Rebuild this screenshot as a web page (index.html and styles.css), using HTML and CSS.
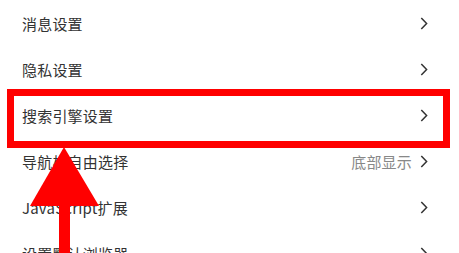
FILE: index.html
```html
<!DOCTYPE html>
<html lang="zh-CN">
<head>
<meta charset="utf-8">
<title>设置</title>
<link rel="stylesheet" href="styles.css">
</head>
<body>
<div class="page">
  <ul class="settings">
    <li class="row"><span class="label">消息设置</span><span class="right"><svg class="chev" viewBox="0 0 8 13"><path d="M1.3 1 L6.6 6.5 L1.3 12"/></svg></span></li>
    <li class="row"><span class="label">隐私设置</span><span class="right"><svg class="chev" viewBox="0 0 8 13"><path d="M1.3 1 L6.6 6.5 L1.3 12"/></svg></span></li>
    <li class="row"><span class="label">搜索引擎设置</span><span class="right"><svg class="chev" viewBox="0 0 8 13"><path d="M1.3 1 L6.6 6.5 L1.3 12"/></svg></span></li>
    <li class="row"><span class="label">导航栏自由选择</span><span class="right"><span class="value">底部显示</span><svg class="chev" viewBox="0 0 8 13"><path d="M1.3 1 L6.6 6.5 L1.3 12"/></svg></span></li>
    <li class="row"><span class="label">JavaScript扩展</span><span class="right"><svg class="chev" viewBox="0 0 8 13"><path d="M1.3 1 L6.6 6.5 L1.3 12"/></svg></span></li>
    <li class="row"><span class="label">设置默认浏览器</span><span class="right"><svg class="chev" viewBox="0 0 8 13"><path d="M1.3 1 L6.6 6.5 L1.3 12"/></svg></span></li>
  </ul>
  <div class="highlight"></div>
  <svg class="arrow" viewBox="0 0 459 253" width="459" height="253">
    <polygon points="30,206 64,147 99,206"/>
    <rect x="59" y="205" width="11" height="48"/>
  </svg>
</div>
</body>
</html>
```

FILE: styles.css
```css
html, body {
  margin: 0;
  padding: 0;
  background: #ffffff;
}
body {
  font-family: "Noto Sans CJK SC", "Noto Sans", sans-serif;
  color: #333333;
  overflow: hidden;
}
.page {
  position: relative;
  width: 459px;
  height: 253px;
  overflow: hidden;
}
.settings {
  list-style: none;
  margin: 0;
  padding: 0;
}
.row {
  height: 46px;
  display: flex;
  align-items: center;
  justify-content: space-between;
  padding: 0 31px 0 22px;
  font-size: 15px;
  line-height: 1;
}
.label {
  color: #333333;
  letter-spacing: 0.2px;
}
.right {
  display: flex;
  align-items: center;
  gap: 8px;
}
.value {
  color: #888888;
  font-size: 15px;
  letter-spacing: 0.2px;
}
.chev {
  width: 8px;
  height: 13px;
  fill: none;
  stroke: #333333;
  stroke-width: 1.5;
}
.highlight {
  position: absolute;
  left: 7px;
  top: 89px;
  width: 443px;
  height: 59px;
  box-sizing: border-box;
  border: 7px solid #ff0000;
}
.arrow {
  position: absolute;
  left: 0;
  top: 0;
  fill: #ff0000;
}
```
